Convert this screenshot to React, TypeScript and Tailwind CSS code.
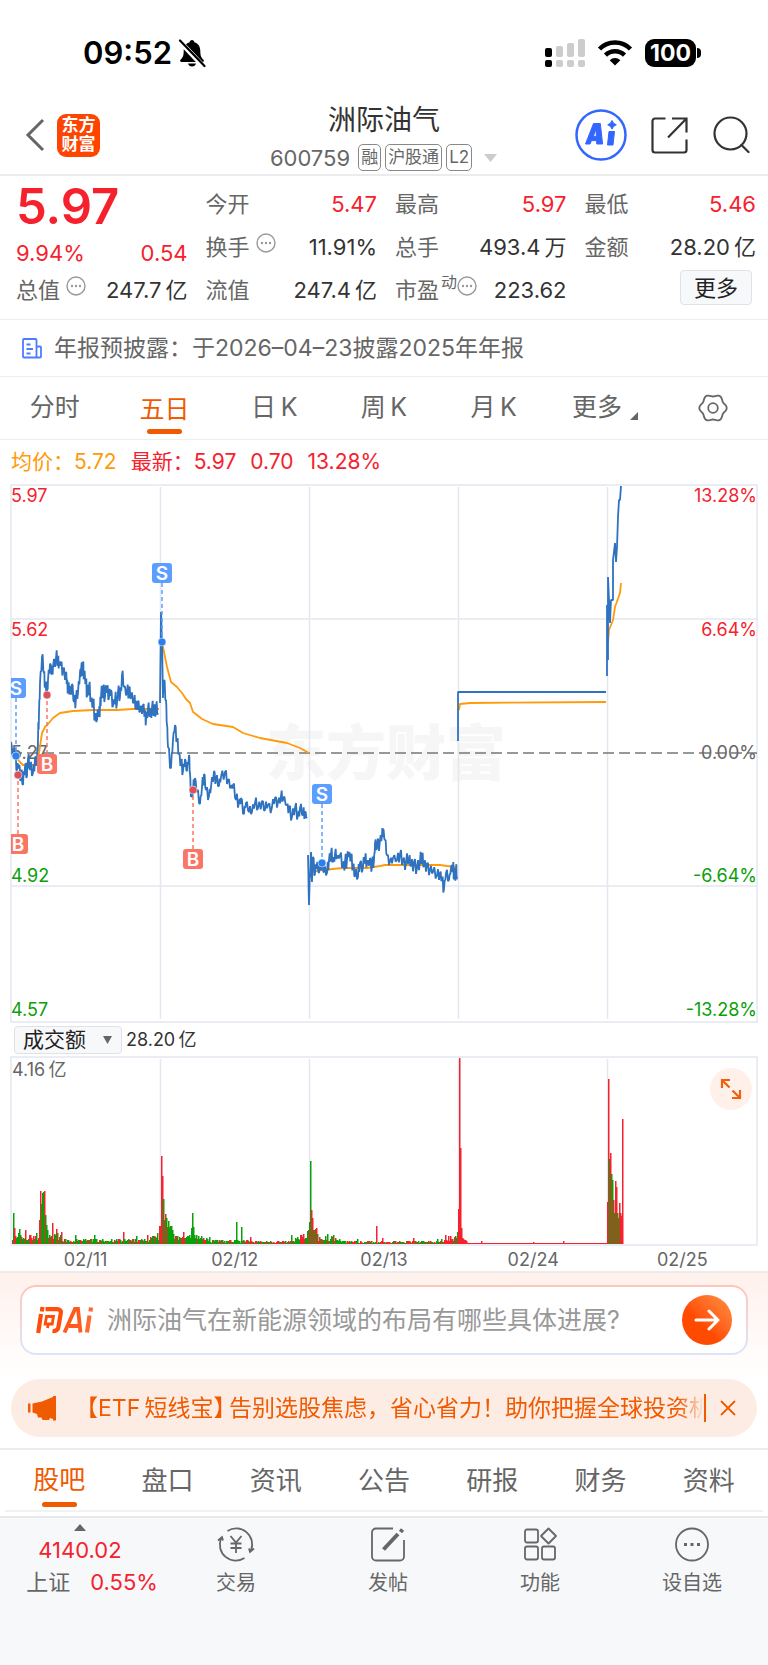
import type { ReactNode } from "react";

type Point = [number, number];

const RED = "#f5222d";
const GREEN = "#0aa00a";
const GRID = "#e4e7ef";

// Chart coordinates: x runs 0-768 over the page width, y starts at the top border.
const priceDays: { amp: number; points: Point[] }[] = [
  {
    amp: 8,
    points: [
      [11, 258], [13, 273], [15, 264], [17, 286], [19, 281], [21, 291], [23, 301], [25, 283], [27, 292], [28, 275],
      [30, 286], [33, 289], [35, 274], [37, 279], [38, 256], [39, 229], [40, 199], [42, 173], [44, 189], [45, 203],
      [47, 209], [48, 196], [50, 180], [52, 190], [53, 183], [56, 174], [58, 174], [59, 181], [61, 178], [63, 186],
      [66, 188], [67, 196], [68, 203], [70, 208], [72, 200], [74, 218], [76, 214], [78, 209], [80, 189], [81, 186],
      [83, 182], [84, 189], [86, 199], [87, 212], [89, 203], [91, 216], [93, 219], [95, 232], [97, 236], [99, 228],
      [100, 223], [101, 213], [103, 206], [105, 213], [107, 204], [109, 214], [111, 206], [113, 222], [115, 216],
      [117, 219], [118, 208], [120, 213], [122, 191], [124, 203], [127, 208], [129, 205], [131, 214], [134, 218],
      [136, 225], [138, 217], [140, 228], [143, 221], [145, 229], [146, 237], [148, 224], [150, 232], [152, 223],
      [154, 231], [156, 225], [158, 229],
    ],
  },
  {
    amp: 6,
    points: [
      [160, 219], [161, 128], [162, 156], [163, 214], [164, 196], [166, 216], [167, 241], [168, 263], [171, 284],
      [173, 256], [175, 241], [177, 256], [179, 269], [181, 279], [183, 287], [185, 275], [187, 287], [189, 271],
      [190, 289], [191, 313], [193, 306], [195, 294], [197, 308], [200, 320], [202, 303], [204, 290], [206, 306],
      [209, 312], [211, 303], [214, 287], [216, 296], [219, 302], [221, 293], [225, 288], [228, 296], [231, 303],
      [233, 301], [236, 316], [239, 318], [241, 314], [244, 330], [246, 319], [249, 328], [252, 328], [255, 319],
      [258, 324], [262, 317], [265, 326], [268, 321], [272, 323], [275, 314], [278, 318], [281, 312], [283, 316],
      [287, 321], [289, 323], [292, 333], [295, 324], [298, 331], [300, 324], [303, 331], [305, 328], [307, 333],
    ],
  },
  {
    amp: 7,
    points: [
      [308, 371], [309, 421], [311, 368], [312, 398], [313, 373], [315, 390], [317, 379], [319, 389], [322, 378],
      [324, 388], [327, 389], [329, 376], [331, 369], [333, 377], [335, 370], [337, 374], [340, 371], [343, 382],
      [345, 378], [347, 376], [349, 369], [351, 375], [353, 381], [355, 392], [358, 393], [360, 379], [363, 383],
      [365, 375], [367, 380], [370, 374], [372, 382], [374, 376], [375, 359], [377, 364], [380, 356], [382, 351],
      [383, 345], [385, 356], [387, 371], [390, 377], [393, 374], [397, 376], [400, 370], [403, 376], [406, 379],
      [409, 375], [411, 382], [414, 378], [417, 384], [420, 377], [422, 372], [424, 382], [427, 379], [430, 386],
      [433, 388], [437, 391], [440, 389], [442, 395], [444, 405], [446, 389], [449, 396], [451, 384], [453, 381],
      [454, 395], [456, 386], [457, 393],
    ],
  },
  { amp: 0, points: [[458, 257], [458, 208], [606, 208]] },
  {
    amp: 0,
    points: [
      [607, 192], [607, 121], [608, 176], [608, 93], [610, 139], [611, 116], [613, 116], [613, 76], [615, 59],
      [616, 78], [617, 63], [618, 33], [619, 16], [620, 16], [621, 2],
    ],
  },
];

const averageDays: Point[][] = [
  [[11, 266], [15, 272], [20, 278], [23, 281], [37, 281], [39, 269], [42, 249], [45, 243], [48, 240], [53, 234], [60, 229], [73, 227], [93, 226], [117, 226], [133, 225], [159, 225]],
  [[162, 158], [165, 173], [167, 183], [171, 198], [177, 203], [182, 209], [186, 215], [190, 219], [193, 228], [197, 231], [202, 235], [213, 240], [233, 243], [243, 249], [260, 254], [287, 259], [300, 264], [309, 269]],
  [[311, 388], [322, 386], [343, 384], [367, 384], [380, 382], [385, 381], [407, 381], [440, 381], [447, 382], [457, 383]],
  [[459, 226], [460, 220], [470, 219], [606, 218]],
  [[608, 159], [609, 146], [613, 136], [615, 123], [620, 109], [621, 99]],
];

const dayLines = [160, 309, 458, 607];
const dates = ["02/11", "02/12", "02/13", "02/24", "02/25"];

const trades: { side: "S" | "B"; x: number; box: number; dot: number }[] = [
  { side: "S", x: 16, box: 204, dot: 272 },
  { side: "B", x: 18, box: 360, dot: 291 },
  { side: "B", x: 47, box: 280, dot: 211 },
  { side: "S", x: 162, box: 89, dot: 158 },
  { side: "B", x: 193, box: 375, dot: 306 },
  { side: "S", x: 322, box: 310, dot: 379 },
];

// [x, height, up]
const volumeSpikes: [number, number, boolean][] = [
  [13, 31, false], [14, 16, true], [19, 15, false], [25, 14, true], [39, 24, true], [40, 53, true], [41, 40, false],
  [42, 51, false], [43, 52, false], [44, 53, true], [45, 29, false], [46, 19, false], [47, 14, false], [52, 21, true],
  [56, 15, true], [61, 12, true], [75, 9, false], [94, 9, false], [123, 12, true], [136, 8, false], [147, 9, true],
  [157, 11, false], [159, 18, true], [160, 18, true], [161, 88, true], [162, 68, true], [163, 45, false],
  [164, 24, false], [165, 30, true], [166, 26, false], [167, 17, true], [168, 23, false], [169, 17, false],
  [170, 18, false], [171, 18, false], [172, 14, false], [173, 10, false], [183, 12, true], [191, 16, false],
  [192, 31, false], [193, 17, false], [194, 9, false], [209, 7, false], [236, 22, false], [241, 17, false], [250, 7, true],
  [291, 9, false], [308, 14, true], [309, 22, false], [310, 83, false], [311, 34, true], [312, 26, true],
  [313, 14, false], [314, 14, false], [315, 15, true], [316, 16, true], [317, 10, false], [327, 10, false],
  [333, 9, false], [357, 5, false], [376, 18, true], [382, 6, true], [413, 6, true], [445, 9, true], [457, 12, false],
  [458, 35, true], [459, 186, true], [460, 96, true], [461, 16, true], [462, 6, true], [463, 5, true], [464, 4, true],
  [465, 4, true], [466, 3, true], [481, 3, true], [533, 2, true], [563, 3, true], [607, 42, true], [608, 165, true],
  [609, 85, false], [610, 91, true], [611, 70, false], [612, 64, false], [613, 44, true], [614, 31, false],
  [615, 63, true], [616, 57, true], [617, 31, false], [618, 26, false], [619, 41, true], [620, 31, true],
  [621, 28, true], [622, 125, true],
];

function createRandom(seed: number) {
  let state = seed;
  return () => {
    state = (state * 16807) % 2147483647;
    return state / 2147483647;
  };
}

function toPath(points: Point[]) {
  return points.map(([x, y], i) => `${i ? "L" : "M"}${x} ${y}`).join("");
}

function roughen(points: Point[], amp: number, seed: number): Point[] {
  const random = createRandom(seed);
  return points.flatMap((point, i): Point[] => {
    const next = points[i + 1];
    if (!next || amp === 0) return [point];
    const dx = (next[0] - point[0]) / 3;
    const dy = (next[1] - point[1]) / 3;
    return [
      point,
      [point[0] + dx, point[1] + dy - (0.2 + random()) * amp],
      [point[0] + dx * 2, point[1] + dy * 2 + (0.2 + random()) * amp],
    ];
  });
}

function baseVolume(x: number) {
  if (x < 62) return 10;
  if (x < 146) return 5;
  if (x < 160) return 5 + (x - 146) / 2;
  if (x < 208) return 8;
  if (x < 250) return 4;
  if (x < 290) return 3;
  if (x < 309) return 4 + (x - 290) / 2;
  if (x < 340) return 7;
  if (x < 436) return 3;
  if (x < 458) return 4 + (x - 436) / 4;
  return 1;
}

function volumeBars() {
  const random = createRandom(77);
  const spikes = new Map(volumeSpikes.map((spike) => [spike[0], spike]));
  const bars: { x: number; height: number; up: boolean }[] = [];
  for (let x = 12; x < 623; x++) {
    const height = Math.max(1, Math.round(baseVolume(x) * (0.35 + random() * 0.75)));
    const up = x > 458 || random() < 0.4;
    const spike = spikes.get(x);
    bars.push(spike ? { x, height: spike[1], up: spike[2] } : { x, height, up });
  }
  return bars;
}

function gearPath() {
  const points: Point[] = [];
  for (let deg = 0; deg < 360; deg += 5) {
    const t = (deg * Math.PI) / 180;
    const r = 12.6 + 1.1 * Math.cos(6 * t);
    points.push([Number((16 + r * Math.cos(t)).toFixed(2)), Number((16 + r * Math.sin(t)).toFixed(2))]);
  }
  return toPath(points) + "Z";
}

function StatusBar() {
  return (
    <div className="flex h-24 items-center justify-between pt-2.5 pr-[67px] pl-[83px] text-black">
      <div className="flex items-center gap-1.5">
        <span className="text-[31px] leading-8 font-semibold">09:52</span>
        <svg width="28" height="30" viewBox="0 0 28 30" aria-label="静音">
          <path d="M14 2c1.400 0 2.300 1 2.300 2.200 4.200 1.200 6 4.600 6 8.800 0 5 1 6.500 3.200 8.800.8.900.3 2.200-1 2.200H3.500c-1.300 0-1.800-1.300-1-2.200C4.700 19.500 5.700 18 5.700 13c0-4.200 1.800-7.600 6-8.800C11.700 3 12.600 2 14 2z" />
          <path d="M10 25.500h8c-.5 2-2 3-4 3s-3.500-1-4-3z" />
          <path d="M0 1.500L26 29" stroke="#fff" strokeWidth="5" />
          <path d="M2 2.500L26.500 28" stroke="#000" strokeWidth="2.200" strokeLinecap="round" />
        </svg>
      </div>
      <div className="flex items-center gap-3">
        <svg width="40" height="28" viewBox="0 0 40 28" aria-label="信号">
          <g fill="#000">
            <rect x="0" y="9" width="7" height="9" rx="2" />
            <rect x="0" y="21" width="7" height="7" rx="2" />
          </g>
          <g fill="#ccc">
            <rect x="11" y="7" width="7" height="11" rx="2" />
            <rect x="22" y="4" width="7" height="14" rx="2" />
            <rect x="33" y="0" width="7" height="18" rx="2" />
            <rect x="11" y="21" width="7" height="7" rx="2" />
            <rect x="22" y="21" width="7" height="7" rx="2" />
            <rect x="33" y="21" width="7" height="7" rx="2" />
          </g>
        </svg>
        <svg width="36" height="26" viewBox="0 0 36 26" aria-label="无线网络" fill="none" stroke="#000">
          <path d="M2.500 9a22 22 0 0 1 31 0" strokeWidth="4.500" />
          <path d="M8.500 15.200a13.500 13.500 0 0 1 19 0" strokeWidth="4.500" />
          <path d="M18 25.500l-5.300-5.300a7.500 7.500 0 0 1 10.600 0z" fill="#000" stroke="none" />
        </svg>
        <div className="flex items-center gap-px">
          <span className="flex h-7 w-[51px] items-center justify-center rounded-[9px] bg-black text-[23px] font-bold text-white">
            100
          </span>
          <span className="h-2.5 w-1 rounded-r-full bg-black" />
        </div>
      </div>
    </div>
  );
}

function Header() {
  return (
    <header className="flex h-20 items-center justify-between border-b-2 border-[#ececec] pr-[18px] pl-6">
      <div className="flex w-[188px] items-center gap-3">
        <button type="button" aria-label="返回">
          <svg width="21" height="34" viewBox="0 0 21 34" fill="none" stroke="#666" strokeWidth="3">
            <path d="M19 2L4 17l15 15" />
          </svg>
        </button>
        <a
          href="#home"
          className="flex h-[43px] w-[43px] flex-col items-center justify-center rounded-[9px] bg-[#ff4400] text-[17px] leading-[19px] font-bold text-white"
        >
          <span>东方</span>
          <span>财富</span>
        </a>
      </div>
      <div className="flex flex-col items-center gap-2 self-end pb-[3px] text-[#333]">
        <h1 className="text-[28px] leading-8">洲际油气</h1>
        <button type="button" className="flex items-center gap-1 text-[#666]">
          <span className="pr-1 text-[22px] leading-6">600759</span>
          {["融", "沪股通", "L2"].map((tag) => (
            <span key={tag} className="rounded-[5px] border border-[#888] px-0.5 text-[17px] leading-[25px]">
              {tag}
            </span>
          ))}
          <svg width="22" height="8" viewBox="0 0 22 8" aria-hidden="true">
            <path d="M8 0h13l-6.500 8z" fill="#ccc" />
          </svg>
        </button>
      </div>
      <div className="flex w-[194px] items-center justify-end gap-6">
        <button type="button" aria-label="AI 助手">
          <svg width="52" height="52" viewBox="0 0 52 52">
            <circle cx="26" cy="26" r="24.500" fill="none" stroke="#3366ff" strokeWidth="2.500" />
            <path
              fillRule="evenodd"
              d="M18.500 14.500h6.800l2.300 20.500h-5.800l-.3-3.400h-5l-1.500 3.400H10.500zM21 20.500l-2.700 6.800h3.200z"
              fill="#3366ff"
              stroke="#3366ff"
              strokeWidth="1"
              strokeLinejoin="round"
            />
            <path d="M34 22.500h5.500L38 36h-5.500z" fill="#3366ff" stroke="#3366ff" strokeLinejoin="round" />
            <path d="M37 11.500l1.500 2.700 2.800 1.600-2.800 1.600-1.500 2.700-1.500-2.700-2.800-1.600 2.800-1.600z" fill="#3366ff" stroke="#3366ff" strokeLinejoin="round" />
          </svg>
        </button>
        <button type="button" aria-label="分享">
          <svg width="37" height="37" viewBox="0 0 37 37" fill="none" stroke="#333" strokeWidth="2.200">
            <path d="M14.500 1.500H4a2.500 2.500 0 0 0-2.500 2.500v29A2.500 2.500 0 0 0 4 35.500h29a2.500 2.500 0 0 0 2.500-2.500V22.500" />
            <path d="M21 1.500h14.500v14M35.500 1.500L17 20.500" />
          </svg>
        </button>
        <button type="button" aria-label="搜索">
          <svg width="38" height="38" viewBox="0 0 38 38" fill="none" stroke="#333" strokeWidth="2.200" strokeLinecap="round">
            <circle cx="18.500" cy="17.500" r="16" />
            <path d="M29.500 29l7 7" />
          </svg>
        </button>
      </div>
    </header>
  );
}

function MoreDots() {
  return (
    <svg width="20" height="20" viewBox="0 0 20 20" className="-translate-y-1" aria-hidden="true">
      <circle cx="10" cy="10" r="9" fill="none" stroke="#999" strokeWidth="1.400" />
      <circle cx="6" cy="10" r="1.200" fill="#999" />
      <circle cx="10" cy="10" r="1.200" fill="#999" />
      <circle cx="14" cy="10" r="1.200" fill="#999" />
    </svg>
  );
}

function Stat({ label, value, red, extra }: { label: string; value: string; red?: boolean; extra?: ReactNode }) {
  return (
    <div className="flex h-[43px] items-center justify-between">
      <dt className="flex items-center gap-1.5 text-[#666]">
        {label}
        {extra}
      </dt>
      <dd className={red ? "text-[#f5222d]" : "text-[#333]"}>{value}</dd>
    </div>
  );
}

function Quote() {
  return (
    <section className="grid grid-cols-4 gap-x-[18px] border-b border-[#eee] pt-1.5 pr-3 pb-2 pl-4 text-[22px] leading-8">
      <div className="flex flex-col text-[#f5222d]">
        <strong className="text-[49px] leading-[50px] font-semibold">5.97</strong>
        <div className="flex h-[42px] items-center justify-between">
          <span>9.94%</span>
          <span>0.54</span>
        </div>
        <dl className="flex items-center justify-between">
          <dt className="flex items-center gap-1.5 text-[#666]">
            总值
            <MoreDots />
          </dt>
          <dd className="text-[#333]">{"247.7\u2009亿"}</dd>
        </dl>
      </div>
      <dl>
        <Stat label="今开" value="5.47" red />
        <Stat label="换手" value="11.91%" extra={<MoreDots />} />
        <Stat label="流值" value={"247.4\u2009亿"} />
      </dl>
      <dl>
        <Stat label="最高" value="5.97" red />
        <Stat label="总手" value={"493.4\u2009万"} />
        <Stat
          label="市盈"
          value="223.62"
          extra={
            <span className="-ml-1 flex items-center">
              <span className="-translate-y-2 text-base">动</span>
              <MoreDots />
            </span>
          }
        />
      </dl>
      <div>
        <dl>
          <Stat label="最低" value="5.46" red />
          <Stat label="金额" value={"28.20\u2009亿"} />
        </dl>
        <div className="flex justify-end pt-0.5 pr-1">
          <button type="button" className="h-[35px] w-[72px] rounded border border-[#dfe2e8] bg-[#f7f8fa] text-[#222]">
            更多
          </button>
        </div>
      </div>
    </section>
  );
}

function Notice() {
  return (
    <a href="#notice" className="flex h-[57px] items-center gap-3 border-b border-[#eee] px-[22px] text-[23px] text-[#666]">
      <svg width="20" height="21" viewBox="0 0 20 21" fill="none" stroke="#4d7cff" strokeWidth="1.800" aria-hidden="true">
        <path d="M14.500 19.500V2a1 1 0 0 0-1-1H2a1 1 0 0 0-1 1v16.500a1 1 0 0 0 1 1h16a1 1 0 0 0 1-1V9.500a1 1 0 0 0-1-1h-3.500" />
        <path d="M4.500 6.500h4M4.500 11h6.500M4.500 15.500h4" />
      </svg>
      <span>年报预披露：于2026–04–23披露2025年年报</span>
    </a>
  );
}

function PeriodTabs() {
  const periods = ["分时", "五日", "日\u2009K", "周\u2009K", "月\u2009K"];
  return (
    <nav className="grid h-[63px] grid-cols-7 border-b border-[#eee] text-[25px] text-[#666]">
      {periods.map((period) =>
        period === "五日" ? (
          <button key={period} type="button" className="flex flex-col items-center justify-end gap-1 pb-[5px] text-[#f05a00]">
            <span className="leading-8">{period}</span>
            <span className="h-[5px] w-[35px] rounded-full bg-[#f05a00]" />
          </button>
        ) : (
          <button key={period} type="button">
            {period}
          </button>
        ),
      )}
      <button type="button" className="flex items-center justify-center gap-2 pl-1">
        更多
        <svg width="9" height="24" viewBox="0 0 9 24" aria-hidden="true">
          <path d="M8 16v8H0z" fill="#666" />
        </svg>
      </button>
      <button type="button" aria-label="设置" className="flex items-center justify-center">
        <svg width="32" height="32" viewBox="0 0 32 32" fill="none" stroke="#666" strokeWidth="1.800">
          <path d={gearPath()} />
          <circle cx="16" cy="16" r="4.800" />
        </svg>
      </button>
    </nav>
  );
}

function TradeMark({ side, x, box, dot }: (typeof trades)[number]) {
  const sell = side === "S";
  const fill = sell ? "#5c9eff" : "#fb7565";
  return (
    <g>
      <line x1={x} x2={x} y1={sell ? box + 10 : box - 10} y2={dot} stroke={fill} strokeWidth="1.500" strokeDasharray="4 3" />
      <circle cx={x} cy={dot} r="4" fill={sell ? "#2b7ff0" : "#d9525a"} stroke="#fff" strokeOpacity="0.500" />
      <rect x={x - 10} y={box - 10} width="20" height="20" rx="3" fill={fill} />
      <text x={x} y={box + 7} textAnchor="middle" fontSize="19" fontWeight="600" fill="#fff">
        {side}
      </text>
    </g>
  );
}

function PriceChart() {
  const leftLabels: [string, number, string][] = [
    ["5.97", 18, RED], ["5.62", 152, RED], ["5.27", 275, "#666"], ["4.92", 398, GREEN], ["4.57", 532, GREEN],
  ];
  const rightLabels: [string, number, string][] = [
    ["13.28%", 18, RED], ["6.64%", 152, RED], ["0.00%", 275, "#666"], ["-6.64%", 398, GREEN], ["-13.28%", 532, GREEN],
  ];
  return (
    <svg viewBox="0 0 768 539" className="block w-full" role="img" aria-label="五日走势">
      <clipPath id="plot">
        <rect x="11" y="0" width="746" height="538" />
      </clipPath>
      <text x="386" y="291" textAnchor="middle" fontSize="60" fontWeight="900" fill="#f6f6f6">
        东方财富
      </text>
      <g stroke={GRID} strokeWidth="1.500">
        {dayLines.map((x) => (
          <line key={x} x1={x + 0.5} x2={x + 0.5} y1="3" y2="535" />
        ))}
        <line x1="11" x2="757" y1="135" y2="135" />
        <line x1="11" x2="757" y1="402" y2="402" />
        <rect x="11" y="1" width="746" height="537" fill="none" />
      </g>
      <line x1="11" x2="757" y1="269" y2="269" stroke="#777" strokeWidth="1.300" strokeDasharray="11 5" />
      {leftLabels.map(([label, y, fill]) => (
        <text key={label} x="11" y={y} fontSize="18" fill={fill}>
          {label}
        </text>
      ))}
      {rightLabels.map(([label, y, fill]) => (
        <text key={label} x="757" y={y} textAnchor="end" fontSize="18" fill={fill}>
          {label}
        </text>
      ))}
      <g clipPath="url(#plot)">
        <g fill="none" stroke="#ff9a0a" strokeWidth="1.800" strokeLinejoin="round">
          {averageDays.map((day) => (
            <path key={day[0][0]} d={toPath(day)} />
          ))}
        </g>
        <g fill="none" stroke="#2f72c0" strokeWidth="1.800" strokeLinejoin="bevel">
          {priceDays.map(({ amp, points }, i) => (
            <path key={points[0][0]} d={toPath(roughen(points, amp, 31 + i))} />
          ))}
        </g>
        {trades.map((trade) => (
          <TradeMark key={trade.x} {...trade} />
        ))}
      </g>
    </svg>
  );
}

function VolumeChart() {
  return (
    <div className="relative">
      <svg viewBox="0 0 768 190" className="block w-full" role="img" aria-label="成交额">
        <g stroke={GRID} strokeWidth="1.500">
          {dayLines.map((x) => (
            <line key={x} x1={x + 0.5} x2={x + 0.5} y1="3" y2="188" />
          ))}
          <rect x="11" y="1" width="746" height="188" fill="none" />
        </g>
        <text x="12" y="20" fontSize="18" fill="#666">
          {"4.16\u2009亿"}
        </text>
        {volumeBars().map(({ x, height, up }) => (
          <rect key={x} x={x} y={188 - height} width="1.500" height={height} fill={up ? RED : GREEN} />
        ))}
      </svg>
      <button
        type="button"
        aria-label="全屏"
        className="absolute top-3 right-4 flex h-[42px] w-[42px] items-center justify-center rounded-full bg-[#fff1ea]"
      >
        <svg width="22" height="22" viewBox="0 0 22 22" fill="none" stroke="#f0600f" strokeWidth="2.200">
          <path d="M2 10V2h8M2 2l7.500 7.500M20 12v8h-8M20 20l-7.500-7.500" />
        </svg>
      </button>
    </div>
  );
}

function Chart() {
  return (
    <section className="border-b-2 border-[#ececec]">
      <p className="flex h-11 items-center gap-3.5 px-[11px] text-[21px] text-[#f5222d]">
        <span className="text-[#ff9a0a]">均价：5.72</span>
        <span>最新：5.97</span>
        <span>0.70</span>
        <span>13.28%</span>
      </p>
      <PriceChart />
      <div className="flex h-[33px] items-center gap-1 pl-3.5 text-[#333]">
        <div className="relative">
          <select
            aria-label="指标"
            className="h-7 w-[108px] appearance-none rounded border border-[#dfe2e8] bg-[#f7f8fa] pl-2 text-[21px] leading-6 text-[#222]"
          >
            <option>成交额</option>
          </select>
          <svg width="9" height="8" viewBox="0 0 9 8" className="pointer-events-none absolute top-2.5 right-2.5" aria-hidden="true">
            <path d="M0 0h9L4.500 8z" fill="#666" />
          </svg>
        </div>
        <span className="text-[18px]">{"28.20\u2009亿"}</span>
      </div>
      <VolumeChart />
      <div className="mx-[11px] grid h-[25px] grid-cols-5 items-center text-center text-[18px] text-[#666]">
        {dates.map((date) => (
          <span key={date}>{date}</span>
        ))}
      </div>
    </section>
  );
}

function AskBar() {
  return (
    <form className="bg-linear-to-b from-[#fff1ec] to-white px-5 pt-3 pb-6">
      <div className="rounded-2xl bg-linear-to-b from-[#ffc4b8] to-[#dbe6f8] p-0.5">
        <div className="flex h-[66px] items-center rounded-[14px] bg-white px-3.5">
          <svg width="58" height="28" viewBox="0 0 58 28" fill="none" stroke="#ff4d0a" strokeWidth="4.200" aria-hidden="true">
            <path d="M5 8L2.200 27M6.500 1l-.7 4.500M9.500 3.200H21q4.500 0 3.800 4L22.500 20.500q-.7 5-6 4.500" />
            <path d="M10.500 10.500h7l-1.300 7.500h-7zM12.500 17l-1 5" strokeWidth="2.800" />
            <path d="M28.500 26.500L39 3h3l2.500 23.500M33 20h9.500" strokeWidth="3.800" stroke="#ff5a1c" />
            <path d="M53.500 9.500l-2.500 17M55 1.500l-.5 4" stroke="#ff6a33" />
          </svg>
          <input
            type="text"
            aria-label="问Ai"
            placeholder="洲际油气在新能源领域的布局有哪些具体进展?"
            className="ml-[13px] min-w-0 flex-1 text-[25px] leading-9 outline-none placeholder:text-[#999]"
          />
          <button
            type="submit"
            aria-label="提问"
            className="flex h-[50px] w-[50px] items-center justify-center rounded-full bg-linear-to-tr from-[#ff4b00] from-40% to-[#ff9040]"
          >
            <svg width="26" height="22" viewBox="0 0 26 22" fill="none" stroke="#fff" strokeWidth="3" strokeLinecap="round" strokeLinejoin="round">
              <path d="M2 11h22M15 2l9 9-9 9" />
            </svg>
          </button>
        </div>
      </div>
    </form>
  );
}

function Banner() {
  return (
    <div className="mx-[11px] mb-[11px] flex h-[58px] items-center rounded-full bg-[#fdece4] pr-[21px] pl-[17px] text-[23px] text-[#f05a00]">
      <svg width="29" height="25" viewBox="0 0 29 25" fill="#f05a00" aria-hidden="true">
        <path d="M0 7.500h2.500v9H0zM4.500 7.500L14 5.500 25 1V0h3v24.500h-3v-1.500L22 22l-1 2h-6.500l-1-2.500H10L9 18l-4.500-1.500z" />
      </svg>
      <a href="#etf" className="ml-[18px] min-w-0 flex-1 overflow-hidden mask-r-from-96% whitespace-nowrap">
        {"【ETF\u2009短线宝"}
        <span className="[font-feature-settings:'halt']">】</span>
        {"\u2009告别选股焦虑，省心省力！助你把握全球投资机会"}
      </a>
      <span className="h-7 w-0.5 bg-[#f05a00]" />
      <button type="button" aria-label="关闭" className="ml-3.5">
        <svg width="16" height="16" viewBox="0 0 16 16" stroke="#f05a00" strokeWidth="1.800">
          <path d="M1 1l14 14M15 1L1 15" />
        </svg>
      </button>
    </div>
  );
}

function SectionTabs() {
  const tabs = ["盘口", "资讯", "公告", "研报", "财务", "资料"];
  return (
    <div className="border-t-2 border-[#ececec] px-[5px] pb-1">
      <nav className="grid h-[62px] grid-cols-7 border-b-2 border-[#f2f2f2] text-[26px] text-[#666]">
        <button type="button" className="flex flex-col items-center justify-end gap-1 pb-[3px] text-[#f05a00]">
          <span className="leading-9">股吧</span>
          <span className="h-[5px] w-[35px] rounded-full bg-[#f05a00]" />
        </button>
        {tabs.map((tab) => (
          <button key={tab} type="button">
            {tab}
          </button>
        ))}
      </nav>
    </div>
  );
}

const actions: { label: string; icon: ReactNode }[] = [
  {
    label: "交易",
    icon: (
      <>
        <path d="M10.500 5A16 16 0 0 1 34 24.500M37 22.500l-4 3.500-1-3.500" />
        <path d="M27.500 32A16 16 0 0 1 4 12.500M1 14.500l4-3.500 1 3.500" />
        <path d="M13.500 10l5.500 6.500L24.500 10M19 16.500V27M13.500 17.500h11M13.500 22h11" />
      </>
    ),
  },
  {
    label: "发帖",
    icon: (
      <>
        <path d="M24 2.500H7A4 4 0 0 0 3 6.500v24a4 4 0 0 0 4 4h24a4 4 0 0 0 4-4V14" />
        <path d="M14.500 23.500L29 8" strokeWidth="4" />
        <path d="M31.500 6l2-2.500" strokeWidth="4" />
      </>
    ),
  },
  {
    label: "功能",
    icon: (
      <>
        <rect x="4" y="3.500" width="13" height="13" rx="2" />
        <rect x="4" y="20.500" width="13" height="13" rx="2" />
        <rect x="21" y="20.500" width="13" height="13" rx="2" />
        <path d="M27.500 2.500l7.500 7.500-7.500 7.500L20 10z" strokeLinejoin="round" />
      </>
    ),
  },
  {
    label: "设自选",
    icon: (
      <>
        <circle cx="19" cy="18.500" r="16" />
        <path d="M11 18.500h3M17.500 18.500h3M24 18.500h3" strokeWidth="3" />
      </>
    ),
  },
];

function BottomBar() {
  return (
    <footer className="flex h-[149px] border-t-2 border-[#e6e8eb] bg-[#f7f8fa] text-[#666]">
      <a href="#index" className="flex w-[160px] flex-col items-center pt-1.5 text-[22px] leading-8">
        <svg width="12" height="10" viewBox="0 0 12 10" aria-hidden="true">
          <path d="M6 0l6 7H0z" fill="#666" />
        </svg>
        <span className="text-[#f5222d]">4140.02</span>
        <span className="flex gap-5 pl-6">
          上证
          <span className="text-[#f5222d]">0.55%</span>
        </span>
      </a>
      <nav className="grid flex-1 grid-cols-4 items-start">
        {actions.map(({ label, icon }) => (
          <button key={label} type="button" className="flex flex-col items-center gap-1.5 pt-2 text-[20px] leading-7">
            <svg width="38" height="37" viewBox="0 0 38 37" fill="none" stroke="#666" strokeWidth="1.800" aria-hidden="true">
              {icon}
            </svg>
            {label}
          </button>
        ))}
      </nav>
    </footer>
  );
}

export default function App() {
  return (
    <div className="min-h-screen bg-white font-['Inter','Noto_Sans_CJK_SC',sans-serif]">
      <StatusBar />
      <Header />
      <Quote />
      <Notice />
      <PeriodTabs />
      <Chart />
      <AskBar />
      <Banner />
      <SectionTabs />
      <BottomBar />
    </div>
  );
}
